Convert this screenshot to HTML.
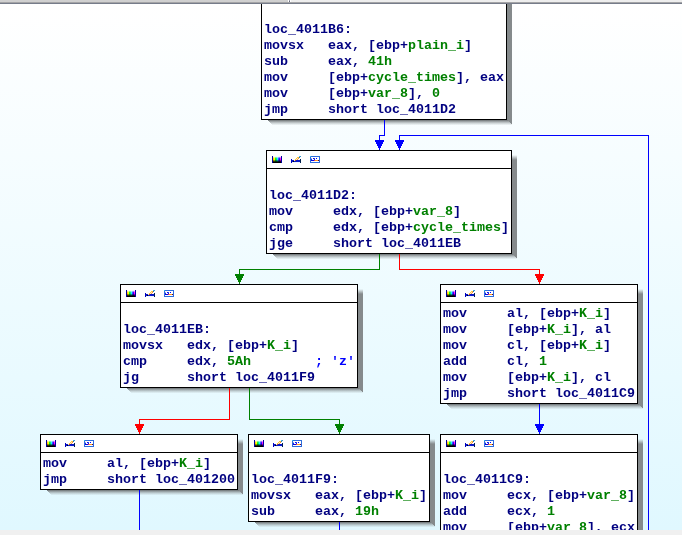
<!DOCTYPE html>
<html><head><meta charset="utf-8"><title>IDA graph view</title>
<style>
html,body{margin:0;padding:0}
body{width:682px;height:535px;overflow:hidden;position:relative;background:#f0f0f0;font-family:"Liberation Mono",monospace;}
#view{position:absolute;left:0;top:4px;width:682px;height:526px;background:linear-gradient(to bottom,#ffffff 0,#e0f8ff 100%);}
#top{position:absolute;left:0;top:0;width:682px;height:4px;z-index:10}
#top .a{position:absolute;left:0;top:0;width:288px;height:2px;background:#d0d0d0}
#top .b{position:absolute;left:288px;top:0;width:394px;height:2px;background:#eeeeee;border-left:1px solid #fff;box-sizing:border-box}
#top .s{position:absolute;left:289px;top:0;width:1px;height:2px;background:linear-gradient(#9a9ca8 0,#9a9ca8 50%,#6a6e7e 50%,#6a6e7e 100%)}
#top .s2{position:absolute;left:290px;top:0;width:1px;height:2px;background:#fff}
#top .c{position:absolute;left:0;top:2px;width:682px;height:1px;background:#a4a4a6}
#top .d{position:absolute;left:0;top:3px;width:682px;height:1px;background:#767c8a}
#bot{position:absolute;left:0;top:530px;width:682px;height:5px;background:#f0f0f0;z-index:10}
svg{position:absolute;left:0;top:0;}
.bx{position:absolute;border:1px solid #000;background:#fff;}
.tb{position:absolute;left:0;top:0;right:0;height:17px;border-bottom:1px solid #000;background:#fff}
#txt{position:absolute;left:0;top:0;width:682px;height:535px;z-index:2;will-change:transform}
.ln{position:absolute;white-space:pre;font-size:13.333px;line-height:16px;height:16px;font-weight:bold;color:#000080;letter-spacing:0}
.g{color:#008000}
.c{color:#0000ff}
</style></head><body>
<div id="view"></div>
<svg width="682" height="535" viewBox="0 0 682 535" shape-rendering="crispEdges" style="z-index:1"><defs>
<linearGradient id="sb" x1="0" y1="0" x2="0" y2="1"><stop offset="0" stop-color="#6e7375" stop-opacity="1"/><stop offset="1" stop-color="#9aa3a6" stop-opacity="0"/></linearGradient>
</defs><linearGradient id="sr0" gradientUnits="userSpaceOnUse" x1="0" y1="-26" x2="0" y2="-21"><stop offset="0" stop-color="#858a8c" stop-opacity="0"/><stop offset="1" stop-color="#858a8c" stop-opacity="1"/></linearGradient><polygon points="507,-26 512,-26 512,125 507,120" fill="url(#sr0)"/><linearGradient id="sbt0" gradientUnits="userSpaceOnUse" x1="0" y1="120" x2="0" y2="125"><stop offset="0" stop-color="#6a6f71" stop-opacity="1"/><stop offset="1" stop-color="#a8b2b5" stop-opacity="0.1"/></linearGradient><polygon points="267,120 507,120 512,125 272,125" fill="url(#sbt0)"/><linearGradient id="sr1" gradientUnits="userSpaceOnUse" x1="0" y1="155" x2="0" y2="160"><stop offset="0" stop-color="#858a8c" stop-opacity="0"/><stop offset="1" stop-color="#858a8c" stop-opacity="1"/></linearGradient><polygon points="512,155 517,155 517,259 512,254" fill="url(#sr1)"/><linearGradient id="sbt1" gradientUnits="userSpaceOnUse" x1="0" y1="254" x2="0" y2="259"><stop offset="0" stop-color="#6a6f71" stop-opacity="1"/><stop offset="1" stop-color="#a8b2b5" stop-opacity="0.1"/></linearGradient><polygon points="272,254 512,254 517,259 277,259" fill="url(#sbt1)"/><linearGradient id="sr2" gradientUnits="userSpaceOnUse" x1="0" y1="289" x2="0" y2="294"><stop offset="0" stop-color="#858a8c" stop-opacity="0"/><stop offset="1" stop-color="#858a8c" stop-opacity="1"/></linearGradient><polygon points="358,289 363,289 363,393 358,388" fill="url(#sr2)"/><linearGradient id="sbt2" gradientUnits="userSpaceOnUse" x1="0" y1="388" x2="0" y2="393"><stop offset="0" stop-color="#6a6f71" stop-opacity="1"/><stop offset="1" stop-color="#a8b2b5" stop-opacity="0.1"/></linearGradient><polygon points="126,388 358,388 363,393 131,393" fill="url(#sbt2)"/><linearGradient id="sr3" gradientUnits="userSpaceOnUse" x1="0" y1="289" x2="0" y2="294"><stop offset="0" stop-color="#858a8c" stop-opacity="0"/><stop offset="1" stop-color="#858a8c" stop-opacity="1"/></linearGradient><polygon points="638,289 643,289 643,409 638,404" fill="url(#sr3)"/><linearGradient id="sbt3" gradientUnits="userSpaceOnUse" x1="0" y1="404" x2="0" y2="409"><stop offset="0" stop-color="#6a6f71" stop-opacity="1"/><stop offset="1" stop-color="#a8b2b5" stop-opacity="0.1"/></linearGradient><polygon points="446,404 638,404 643,409 451,409" fill="url(#sbt3)"/><linearGradient id="sr4" gradientUnits="userSpaceOnUse" x1="0" y1="439" x2="0" y2="444"><stop offset="0" stop-color="#858a8c" stop-opacity="0"/><stop offset="1" stop-color="#858a8c" stop-opacity="1"/></linearGradient><polygon points="238,439 243,439 243,495 238,490" fill="url(#sr4)"/><linearGradient id="sbt4" gradientUnits="userSpaceOnUse" x1="0" y1="490" x2="0" y2="495"><stop offset="0" stop-color="#6a6f71" stop-opacity="1"/><stop offset="1" stop-color="#a8b2b5" stop-opacity="0.1"/></linearGradient><polygon points="46,490 238,490 243,495 51,495" fill="url(#sbt4)"/><linearGradient id="sr5" gradientUnits="userSpaceOnUse" x1="0" y1="439" x2="0" y2="444"><stop offset="0" stop-color="#858a8c" stop-opacity="0"/><stop offset="1" stop-color="#858a8c" stop-opacity="1"/></linearGradient><polygon points="430,439 435,439 435,527 430,522" fill="url(#sr5)"/><linearGradient id="sbt5" gradientUnits="userSpaceOnUse" x1="0" y1="522" x2="0" y2="527"><stop offset="0" stop-color="#6a6f71" stop-opacity="1"/><stop offset="1" stop-color="#a8b2b5" stop-opacity="0.1"/></linearGradient><polygon points="254,522 430,522 435,527 259,527" fill="url(#sbt5)"/><linearGradient id="sr6" gradientUnits="userSpaceOnUse" x1="0" y1="439" x2="0" y2="444"><stop offset="0" stop-color="#858a8c" stop-opacity="0"/><stop offset="1" stop-color="#858a8c" stop-opacity="1"/></linearGradient><polygon points="638,439 643,439 643,559 638,554" fill="url(#sr6)"/><linearGradient id="sbt6" gradientUnits="userSpaceOnUse" x1="0" y1="554" x2="0" y2="559"><stop offset="0" stop-color="#6a6f71" stop-opacity="1"/><stop offset="1" stop-color="#a8b2b5" stop-opacity="0.1"/></linearGradient><polygon points="446,554 638,554 643,559 451,559" fill="url(#sbt6)"/><rect x="384" y="120" width="1" height="16" fill="#0000ff"/><rect x="379" y="135" width="6" height="1" fill="#0000ff"/><rect x="379" y="135" width="1" height="6" fill="#0000ff"/><rect x="375" y="140" width="9" height="2" fill="#0000ff"/><rect x="376" y="142" width="7" height="2" fill="#0000ff"/><rect x="377" y="144" width="5" height="2" fill="#0000ff"/><rect x="378" y="146" width="3" height="2" fill="#0000ff"/><rect x="379" y="148" width="1" height="2" fill="#0000ff"/><rect x="648" y="135" width="1" height="395" fill="#0000ff"/><rect x="399" y="135" width="250" height="1" fill="#0000ff"/><rect x="399" y="135" width="1" height="6" fill="#0000ff"/><rect x="395" y="140" width="9" height="2" fill="#0000ff"/><rect x="396" y="142" width="7" height="2" fill="#0000ff"/><rect x="397" y="144" width="5" height="2" fill="#0000ff"/><rect x="398" y="146" width="3" height="2" fill="#0000ff"/><rect x="399" y="148" width="1" height="2" fill="#0000ff"/><rect x="379" y="254" width="1" height="16" fill="#008000"/><rect x="239" y="269" width="141" height="1" fill="#008000"/><rect x="239" y="269" width="1" height="6" fill="#008000"/><rect x="235" y="274" width="9" height="2" fill="#008000"/><rect x="236" y="276" width="7" height="2" fill="#008000"/><rect x="237" y="278" width="5" height="2" fill="#008000"/><rect x="238" y="280" width="3" height="2" fill="#008000"/><rect x="239" y="282" width="1" height="2" fill="#008000"/><rect x="399" y="254" width="1" height="16" fill="#ff0000"/><rect x="399" y="269" width="141" height="1" fill="#ff0000"/><rect x="539" y="269" width="1" height="6" fill="#ff0000"/><rect x="535" y="274" width="9" height="2" fill="#ff0000"/><rect x="536" y="276" width="7" height="2" fill="#ff0000"/><rect x="537" y="278" width="5" height="2" fill="#ff0000"/><rect x="538" y="280" width="3" height="2" fill="#ff0000"/><rect x="539" y="282" width="1" height="2" fill="#ff0000"/><rect x="229" y="388" width="1" height="32" fill="#ff0000"/><rect x="139" y="419" width="91" height="1" fill="#ff0000"/><rect x="139" y="419" width="1" height="6" fill="#ff0000"/><rect x="135" y="424" width="9" height="2" fill="#ff0000"/><rect x="136" y="426" width="7" height="2" fill="#ff0000"/><rect x="137" y="428" width="5" height="2" fill="#ff0000"/><rect x="138" y="430" width="3" height="2" fill="#ff0000"/><rect x="139" y="432" width="1" height="2" fill="#ff0000"/><rect x="249" y="388" width="1" height="32" fill="#008000"/><rect x="249" y="419" width="91" height="1" fill="#008000"/><rect x="339" y="419" width="1" height="6" fill="#008000"/><rect x="335" y="424" width="9" height="2" fill="#008000"/><rect x="336" y="426" width="7" height="2" fill="#008000"/><rect x="337" y="428" width="5" height="2" fill="#008000"/><rect x="338" y="430" width="3" height="2" fill="#008000"/><rect x="339" y="432" width="1" height="2" fill="#008000"/><rect x="539" y="404" width="1" height="21" fill="#0000ff"/><rect x="535" y="424" width="9" height="2" fill="#0000ff"/><rect x="536" y="426" width="7" height="2" fill="#0000ff"/><rect x="537" y="428" width="5" height="2" fill="#0000ff"/><rect x="538" y="430" width="3" height="2" fill="#0000ff"/><rect x="539" y="432" width="1" height="2" fill="#0000ff"/><rect x="139" y="490" width="1" height="40" fill="#0000ff"/><rect x="339" y="522" width="1" height="8" fill="#0000ff"/></svg>
<div style="position:absolute;left:0;top:0;z-index:2">
<div class="bx" style="left:261px;top:-31px;width:244px;height:149px"><div class="tb"></div></div><div class="bx" style="left:266px;top:150px;width:244px;height:102px"><div class="tb"></div></div><div class="bx" style="left:120px;top:284px;width:236px;height:102px"><div class="tb"></div></div><div class="bx" style="left:440px;top:284px;width:196px;height:118px"><div class="tb"></div></div><div class="bx" style="left:40px;top:434px;width:196px;height:54px"><div class="tb"></div></div><div class="bx" style="left:248px;top:434px;width:180px;height:86px"><div class="tb"></div></div><div class="bx" style="left:440px;top:434px;width:196px;height:118px"><div class="tb"></div></div>
</div>
<div id="txt">
<div class="ln" style="left:264px;top:22px">loc_4011B6:</div><div class="ln" style="left:264px;top:38px">movsx   eax, [ebp+<span class="g">plain_i</span>]</div><div class="ln" style="left:264px;top:54px">sub     eax, <span class="g">41h</span></div><div class="ln" style="left:264px;top:70px">mov     [ebp+<span class="g">cycle_times</span>], eax</div><div class="ln" style="left:264px;top:86px">mov     [ebp+<span class="g">var_8</span>], <span class="g">0</span></div><div class="ln" style="left:264px;top:102px">jmp     short loc_4011D2</div><div class="ln" style="left:269px;top:188px">loc_4011D2:</div><div class="ln" style="left:269px;top:204px">mov     edx, [ebp+<span class="g">var_8</span>]</div><div class="ln" style="left:269px;top:220px">cmp     edx, [ebp+<span class="g">cycle_times</span>]</div><div class="ln" style="left:269px;top:236px">jge     short loc_4011EB</div><div class="ln" style="left:123px;top:322px">loc_4011EB:</div><div class="ln" style="left:123px;top:338px">movsx   edx, [ebp+<span class="g">K_i</span>]</div><div class="ln" style="left:123px;top:354px">cmp     edx, <span class="g">5Ah</span>        <span class="c">; 'z'</span></div><div class="ln" style="left:123px;top:370px">jg      short loc_4011F9</div><div class="ln" style="left:443px;top:306px">mov     al, [ebp+<span class="g">K_i</span>]</div><div class="ln" style="left:443px;top:322px">mov     [ebp+<span class="g">K_i</span>], al</div><div class="ln" style="left:443px;top:338px">mov     cl, [ebp+<span class="g">K_i</span>]</div><div class="ln" style="left:443px;top:354px">add     cl, <span class="g">1</span></div><div class="ln" style="left:443px;top:370px">mov     [ebp+<span class="g">K_i</span>], cl</div><div class="ln" style="left:443px;top:386px">jmp     short loc_4011C9</div><div class="ln" style="left:43px;top:456px">mov     al, [ebp+<span class="g">K_i</span>]</div><div class="ln" style="left:43px;top:472px">jmp     short loc_401200</div><div class="ln" style="left:251px;top:472px">loc_4011F9:</div><div class="ln" style="left:251px;top:488px">movsx   eax, [ebp+<span class="g">K_i</span>]</div><div class="ln" style="left:251px;top:504px">sub     eax, <span class="g">19h</span></div><div class="ln" style="left:443px;top:472px">loc_4011C9:</div><div class="ln" style="left:443px;top:488px">mov     ecx, [ebp+<span class="g">var_8</span>]</div><div class="ln" style="left:443px;top:504px">add     ecx, <span class="g">1</span></div><div class="ln" style="left:443px;top:520px">mov     [ebp+<span class="g">var_8</span>], ecx</div><div class="ln" style="left:443px;top:536px">mov     edx, [ebp+<span class="g">var_8</span>]</div>
</div>
<svg width="682" height="535" viewBox="0 0 682 535" shape-rendering="crispEdges" style="z-index:3"><defs><g id="ic"><rect x="0" y="0" width="1" height="7" fill="#0000a0"/><rect x="9" y="0" width="1" height="7" fill="#0000a0"/><rect x="1" y="0" width="1" height="1" fill="#fffcf2"/><rect x="2" y="0" width="1" height="1" fill="#fffff2"/><rect x="3" y="0" width="1" height="1" fill="#f2fff2"/><rect x="4" y="0" width="1" height="1" fill="#f2fdf9"/><rect x="5" y="0" width="1" height="1" fill="#f2ffff"/><rect x="6" y="0" width="1" height="1" fill="#f5f5ff"/><rect x="7" y="0" width="1" height="1" fill="#f4f2ff"/><rect x="8" y="0" width="1" height="1" fill="#fff2ff"/><rect x="1" y="1" width="1" height="1" fill="#ffe080"/><rect x="2" y="1" width="1" height="1" fill="#ffff80"/><rect x="3" y="1" width="1" height="1" fill="#80ff80"/><rect x="4" y="1" width="1" height="1" fill="#80f0c0"/><rect x="5" y="1" width="1" height="1" fill="#80ffff"/><rect x="6" y="1" width="1" height="1" fill="#a0a0ff"/><rect x="7" y="1" width="1" height="1" fill="#9080ff"/><rect x="8" y="1" width="1" height="1" fill="#ff80ff"/><rect x="1" y="2" width="1" height="1" fill="#ffc61a"/><rect x="2" y="2" width="1" height="1" fill="#ffff1a"/><rect x="3" y="2" width="1" height="1" fill="#1aff1a"/><rect x="4" y="2" width="1" height="1" fill="#1ae38d"/><rect x="5" y="2" width="1" height="1" fill="#1affff"/><rect x="6" y="2" width="1" height="1" fill="#5353ff"/><rect x="7" y="2" width="1" height="1" fill="#361aff"/><rect x="8" y="2" width="1" height="1" fill="#ff1aff"/><rect x="1" y="3" width="1" height="1" fill="#ffc000"/><rect x="2" y="3" width="1" height="1" fill="#ffff00"/><rect x="3" y="3" width="1" height="1" fill="#00ff00"/><rect x="4" y="3" width="1" height="1" fill="#00e080"/><rect x="5" y="3" width="1" height="1" fill="#00ffff"/><rect x="6" y="3" width="1" height="1" fill="#4040ff"/><rect x="7" y="3" width="1" height="1" fill="#2000ff"/><rect x="8" y="3" width="1" height="1" fill="#ff00ff"/><rect x="1" y="4" width="1" height="1" fill="#997300"/><rect x="2" y="4" width="1" height="1" fill="#999900"/><rect x="3" y="4" width="1" height="1" fill="#009900"/><rect x="4" y="4" width="1" height="1" fill="#00864d"/><rect x="5" y="4" width="1" height="1" fill="#009999"/><rect x="6" y="4" width="1" height="1" fill="#262699"/><rect x="7" y="4" width="1" height="1" fill="#130099"/><rect x="8" y="4" width="1" height="1" fill="#990099"/><rect x="1" y="5" width="1" height="1" fill="#332600"/><rect x="2" y="5" width="1" height="1" fill="#333300"/><rect x="3" y="5" width="1" height="1" fill="#003300"/><rect x="4" y="5" width="1" height="1" fill="#002d1a"/><rect x="5" y="5" width="1" height="1" fill="#003333"/><rect x="6" y="5" width="1" height="1" fill="#0d0d33"/><rect x="7" y="5" width="1" height="1" fill="#060033"/><rect x="8" y="5" width="1" height="1" fill="#330033"/><rect x="1" y="6" width="1" height="1" fill="#000000"/><rect x="2" y="6" width="1" height="1" fill="#000000"/><rect x="3" y="6" width="1" height="1" fill="#000000"/><rect x="4" y="6" width="1" height="1" fill="#000000"/><rect x="5" y="6" width="1" height="1" fill="#000000"/><rect x="6" y="6" width="1" height="1" fill="#000000"/><rect x="7" y="6" width="1" height="1" fill="#000000"/><rect x="8" y="6" width="1" height="1" fill="#000000"/><rect x="19" y="3" width="1" height="4" fill="#0000c0"/><rect x="28" y="3" width="1" height="4" fill="#002050"/><rect x="20" y="4" width="8" height="2" fill="#0818c8"/><rect x="20" y="6" width="8" height="1" fill="#eef6ff"/><rect x="21" y="5" width="1" height="1" fill="#000000"/><rect x="27" y="0" width="1" height="1" fill="#58b0e0"/><rect x="28" y="0" width="1" height="1" fill="#3898d0"/><rect x="25" y="1" width="1" height="1" fill="#ffc830"/><rect x="26" y="1" width="1" height="1" fill="#ffb840"/><rect x="27" y="1" width="1" height="1" fill="#2080b0"/><rect x="24" y="2" width="1" height="1" fill="#ffc830"/><rect x="25" y="2" width="1" height="1" fill="#fff0c0"/><rect x="26" y="2" width="1" height="1" fill="#f08838"/><rect x="23" y="3" width="1" height="1" fill="#ffc838"/><rect x="24" y="3" width="1" height="1" fill="#fff0c0"/><rect x="25" y="3" width="1" height="1" fill="#f09048"/><rect x="22" y="4" width="1" height="1" fill="#fff0b0"/><rect x="23" y="4" width="1" height="1" fill="#c04828"/><rect x="38" y="0" width="10" height="7" fill="#2c6cdc"/><rect x="39" y="1" width="8" height="5" fill="#ffffff"/><rect x="38" y="0" width="1" height="1" fill="#30c0f0"/><rect x="39" y="2" width="1" height="1" fill="#a0b0f0"/><rect x="39" y="3" width="1" height="1" fill="#2030e0"/><rect x="39" y="4" width="3" height="1" fill="#0000e0"/><rect x="41" y="2" width="1" height="1" fill="#0808f0"/><rect x="42" y="2" width="1" height="1" fill="#3040e8"/><rect x="42" y="3" width="1" height="1" fill="#1020e0"/><rect x="44" y="2" width="1" height="1" fill="#0000ff"/><rect x="42" y="4" width="1" height="1" fill="#e02070"/><rect x="43" y="4" width="3" height="1" fill="#ffa020"/><rect x="46" y="4" width="1" height="1" fill="#500050"/></g></defs><use href="#ic" x="272" y="156"/><use href="#ic" x="126" y="290"/><use href="#ic" x="446" y="290"/><use href="#ic" x="46" y="440"/><use href="#ic" x="254" y="440"/><use href="#ic" x="446" y="440"/></svg>
<div id="top"><div class="a"></div><div class="b"></div><div class="s"></div><div class="s2"></div><div class="c"></div><div class="d"></div></div>
<div id="bot"></div>
</body></html>
